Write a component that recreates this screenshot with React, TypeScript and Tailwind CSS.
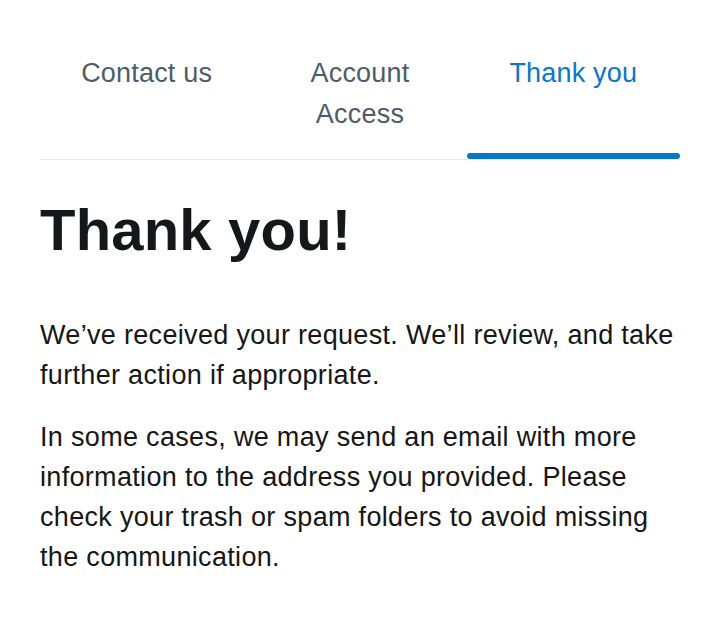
const tabs = [
  { label: "Contact us", active: false },
  { label: "Account Access", active: false },
  { label: "Thank you", active: true },
];

export default function App() {
  return (
    <div className="min-h-[626px] bg-white px-10 font-['Liberation_Sans',Arial,sans-serif]">
      {/* Step tabs */}
      <div className="grid grid-cols-3 border-b border-[#e6e9ec] pt-[53px]">
        {tabs.map((t) => (
          <div key={t.label} className="relative flex justify-center px-4 pb-[24px]">
            <span
              className={
                "max-w-[160px] text-center text-[27px] leading-[41px] tracking-[0.2px] " +
                (t.active ? "text-[#0d76c6]" : "text-[#4e5c67]")
              }
            >
              {t.label}
            </span>
            {t.active && (
              <span className="absolute inset-x-0 bottom-0 h-[6px] rounded-full bg-[#0a75c5]" />
            )}
          </div>
        ))}
      </div>

      <h1 className="mt-[38px] text-[58px] leading-[64px] font-bold tracking-[0.2px] text-[#15171a]">
        Thank you!
      </h1>

      <div className="mt-[53px] flex flex-col gap-[22px] text-[27px] leading-[40px] tracking-[0.32px] text-[#161616]">
        <p>We’ve received your request. We’ll review, and take further action if appropriate.</p>
        <p>
          In some cases, we may send an email with more information to the address you provided.
          Please check your trash or spam folders to avoid missing the communication.
        </p>
      </div>
    </div>
  );
}
